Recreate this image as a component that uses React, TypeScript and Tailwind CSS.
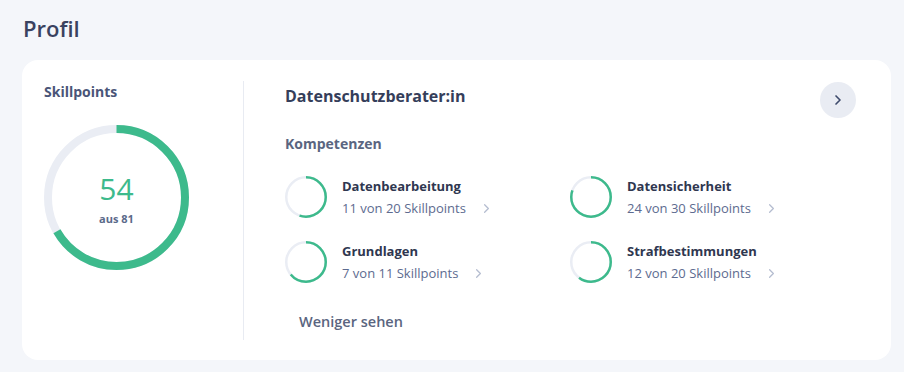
import { ChevronRight } from "lucide-react";

const competences = [
  { name: "Datenbearbeitung", value: 11, max: 20 },
  { name: "Datensicherheit", value: 24, max: 30 },
  { name: "Grundlagen", value: 7, max: 11 },
  { name: "Strafbestimmungen", value: 12, max: 20 },
];

const Ring = ({
  size,
  stroke,
  value,
  max,
}: {
  size: number;
  stroke: number;
  value: number;
  max: number;
}) => {
  const r = (size - stroke) / 2;
  const c = 2 * Math.PI * r;
  const pct = value / max;
  return (
    <svg width={size} height={size} className="shrink-0 -rotate-90">
      <circle cx={size / 2} cy={size / 2} r={r} fill="none" stroke="#eaedf4" strokeWidth={stroke} />
      <circle
        cx={size / 2}
        cy={size / 2}
        r={r}
        fill="none"
        stroke="#3dba8c"
        strokeWidth={stroke}
        strokeDasharray={`${c * pct} ${c}`}
      />
    </svg>
  );
};

const App = () => {
  return (
    <div className="w-[904px] h-[372px] bg-[#f4f6fa] px-[22px] pt-[13px] font-['Open_Sans',sans-serif]">
      <h1 className="text-[22px] leading-[30px] font-semibold text-[#3a4260] ml-px">Profil</h1>
      <div className="mt-[17px] h-[300px] w-[869px] bg-white rounded-2xl flex pt-[21px] pb-[20px]">
        {/* skillpoints */}
        <div className="w-[222px] shrink-0 pl-[22px] border-r border-[#e8ebf2]">
          <h2 className="text-[14px] leading-[22px] font-bold text-[#4a5578]">Skillpoints</h2>
          <div className="relative mt-[22px] w-[145px] h-[145px]">
            <Ring size={145} stroke={8} value={54} max={81} />
            <div className="absolute inset-0 flex flex-col items-center justify-center">
              <span className="text-[30px] leading-[34px] text-[#3dba8c] mt-[2px]">54</span>
              <span className="text-[11px] leading-[14px] font-bold text-[#5b6a8a] mt-[6px]">aus 81</span>
            </div>
          </div>
        </div>

        {/* job */}
        <div className="flex-1 pl-[41px] pr-[35px]">
          <div className="flex items-start justify-between">
            <h2 className="text-[16px] leading-[32px] font-bold text-[#353e5a] mt-[-1px]">Datenschutzberater:in</h2>
            <button className="w-[36px] h-[36px] rounded-full bg-[#e9ecf3] flex items-center justify-center mt-[1px]">
              <ChevronRight size={16} strokeWidth={2.5} className="text-[#3d4a6b]" />
            </button>
          </div>
          <h3 className="mt-[15px] text-[14px] leading-[22px] font-bold text-[#5a6580]">Kompetenzen</h3>
          <div className="mt-[21px] grid grid-cols-[285px_1fr] gap-y-[23px]">
            {competences.map((c) => (
              <div key={c.name} className="flex items-center">
                <Ring size={42} stroke={2.5} value={c.value} max={c.max} />
                <div className="ml-[15px]">
                  <div className="text-[13px] leading-[20px] font-bold text-[#2f3750]">{c.name}</div>
                  <div className="flex items-center mt-[2px]">
                    <span className="text-[13px] leading-[20px] text-[#5d6b8f]">
                      {c.value} von {c.max} Skillpoints
                    </span>
                    <ChevronRight size={15} strokeWidth={2} className="ml-[13px] text-[#b5bdd0]" />
                  </div>
                </div>
              </div>
            ))}
          </div>
          <button className="mt-[28px] ml-[14px] text-[14.5px] leading-[22px] font-semibold text-[#5a6580]">
            Weniger sehen
          </button>
        </div>
      </div>
    </div>
  );
};

export default App;
